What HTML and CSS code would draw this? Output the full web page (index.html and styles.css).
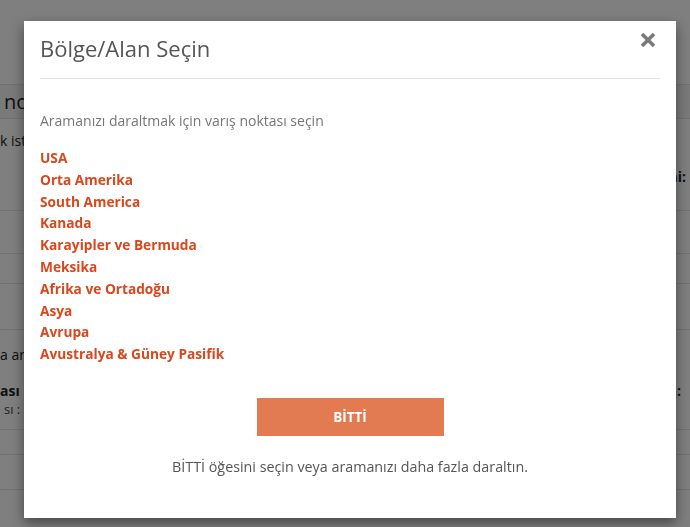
FILE: index.html
```html
<!DOCTYPE html>
<html lang="tr">
  <head>
    <meta charset="UTF-8" />
    <meta name="viewport" content="width=device-width, initial-scale=1.0" />
    <title>Bölge/Alan Seçin</title>
    <link rel="stylesheet" href="styles.css">
  </head>
  <body>
    <div class="page">
      <div class="row row-top"></div>
      <div class="row row-title"><span class="big">no</span></div>
      <div class="row row-a">
        <span class="left">k ist</span>
        <span class="right bold">Seçimi:</span>
      </div>
      <div class="row row-b"></div>
      <div class="row row-c"></div>
      <div class="row row-d"></div>
      <div class="row row-e">
        <span class="left">a ara</span>
        <div class="pair">
          <span class="left bold">ası</span>
          <span class="right bold">Tarih:</span>
        </div>
        <span class="left small">sı :</span>
      </div>
      <div class="row row-f"></div>
      <div class="row row-g"></div>
      <div class="row row-h"></div>
    </div>

    <div class="overlay"></div>

    <div class="modal">
      <div class="modal-header">
        <h2>Bölge/Alan Seçin</h2>
        <button class="close" aria-label="Kapat">
          <svg width="16" height="16" viewBox="0 0 16 16">
            <path d="M2 2 L14 14 M14 2 L2 14" stroke="#7a7a7a" stroke-width="3.6" stroke-linecap="butt" />
          </svg>
        </button>
      </div>
      <div class="modal-body">
        <p class="hint">Aramanızı daraltmak için varış noktası seçin</p>
        <ul class="regions">
          <li><a href="#">USA</a></li>
          <li><a href="#">Orta Amerika</a></li>
          <li><a href="#">South America</a></li>
          <li><a href="#">Kanada</a></li>
          <li><a href="#">Karayipler ve Bermuda</a></li>
          <li><a href="#">Meksika</a></li>
          <li><a href="#">Afrika ve Ortadoğu</a></li>
          <li><a href="#">Asya</a></li>
          <li><a href="#">Avrupa</a></li>
          <li><a href="#">Avustralya &amp; Güney Pasifik</a></li>
        </ul>
        <div class="actions">
          <button class="done">BİTTİ</button>
        </div>
        <p class="note">BİTTİ öğesini seçin veya aramanızı daha fazla daraltın.</p>
      </div>
    </div>
  </body>
</html>
```

FILE: styles.css
```css
* {
  margin: 0;
  padding: 0;
  box-sizing: border-box;
}
body {
  font-family: "Open Sans", "Liberation Sans", sans-serif;
  background-color: white;
  color: #222;
  overflow: hidden;
}
.page {
  width: 690px;
}
.row {
  border-bottom: 1px solid #e4e4e4;
  display: flex;
  flex-direction: column;
  font-size: 14px;
  white-space: nowrap;
}
.row-top {
  height: 84px;
  border-bottom: none;
}
.row-title {
  height: 35px;
  background-color: #f4f4f4;
  border-top: 1px solid #e4e4e4;
  justify-content: center;
  padding-left: 4px;
}
.big {
  font-size: 20px;
}
.row-a {
  height: 92px;
  padding-top: 12px;
}
.row-a .right {
  align-self: flex-end;
  margin-top: 17px;
  margin-right: 4px;
}
.row-b {
  height: 43px;
}
.row-c {
  height: 30px;
}
.row-d {
  height: 46px;
}
.row-e {
  height: 100px;
  padding-top: 15px;
}
.row-e .pair {
  display: flex;
  justify-content: space-between;
  margin-top: 17px;
}
.row-e .pair .right {
  margin-right: 9px;
}
.row-e .small {
  font-size: 13px;
  padding-left: 4px;
  color: #444;
}
.bold {
  font-weight: bold;
}
.row-f {
  height: 25px;
}
.row-g {
  height: 35px;
}
.row-h {
  height: 40px;
}
.overlay {
  position: fixed;
  inset: 0;
  background-color: rgba(0, 0, 0, 0.5);
}
.modal {
  position: fixed;
  left: 24px;
  top: 21px;
  width: 652px;
  height: 497px;
  background-color: white;
  box-shadow: 0 5px 12px rgba(0, 0, 0, 0.45);
  padding: 0 16px;
}
.modal-header {
  display: flex;
  justify-content: space-between;
  align-items: flex-start;
  padding-top: 12px;
  padding-bottom: 15px;
  border-bottom: 1px solid #e6e6e6;
}
.modal-header h2 {
  font-size: 22px;
  font-weight: normal;
  line-height: 30px;
  color: #555;
}
.close {
  background: none;
  border: none;
  cursor: pointer;
  margin-top: -1px;
  margin-right: 4px;
  display: flex;
}
.hint {
  margin-top: 32px;
  font-size: 14px;
  line-height: 20px;
  color: #777;
}
.regions {
  list-style: none;
  margin-top: 16px;
}
.regions li {
  line-height: 21.8px;
  font-size: 13.7px;
}
.regions a {
  color: #db471c;
  font-weight: bold;
  text-decoration: none;
}
.actions {
  display: flex;
  justify-content: center;
  margin-top: 33px;
}
.done {
  width: 187px;
  height: 38px;
  background-color: #e27b52;
  color: white;
  border: none;
  font-family: inherit;
  font-weight: bold;
  font-size: 13.5px;
  cursor: pointer;
}
.note {
  margin-top: 21px;
  text-align: center;
  font-size: 14.3px;
  line-height: 20px;
  color: #555;
}
```
